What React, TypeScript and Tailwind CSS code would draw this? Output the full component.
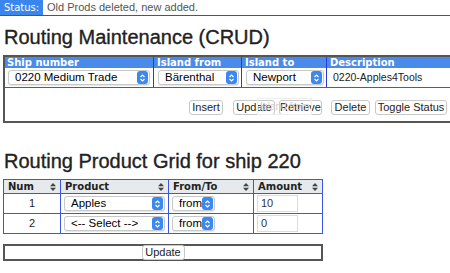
import { FC } from "react";

const verdana = "font-['DejaVu_Sans',Verdana,sans-serif]";
const helv = "font-['Liberation_Sans',Arial,sans-serif]";

const Stepper: FC = () => (
    <span className="w-[11px] h-[13px] rounded-[3px] bg-[#3a88f0] flex items-center justify-center shrink-0">
        <svg width="7" height="10" viewBox="0 0 7 10" fill="none" stroke="white" strokeWidth="1.2">
            <path d="M1.5 4 L3.5 2 L5.5 4" />
            <path d="M1.5 6 L3.5 8 L5.5 6" />
        </svg>
    </span>
);

const Select: FC<{ label: string; w: string }> = ({ label, w }) => (
    <div className={`${w} h-[15px] bg-white border border-[#c8c8c8] rounded-[3px] flex items-center pl-[6px] pr-[1px] shadow-[0_1px_1px_rgba(0,0,0,0.1)]`}>
        <span className={`flex-1 text-[11.5px] text-black ${helv} leading-none`}>{label}</span>
        <Stepper />
    </div>
);

const Btn: FC<{ label: string; w: string; ml?: string }> = ({ label, w, ml = "" }) => (
    <div className={`${w} ${ml} h-[15px] bg-white border border-[#c8c8c8] rounded-[3px] flex items-center justify-center text-[11px] text-[#222] ${helv} leading-none`}>
        {label}
    </div>
);

const SortIcon: FC = () => (
    <svg width="6" height="8" viewBox="0 0 6 8" fill="#444">
        <path d="M0 3.3 L3 0 L6 3.3 Z" />
        <path d="M0 4.7 L3 8 L6 4.7 Z" />
    </svg>
);

const Input: FC<{ v: string }> = ({ v }) => (
    <div className={`w-[41px] h-[17px] border border-[#dcdcdc] flex items-center pl-[3px] text-[11px] text-[#333] ${helv}`}>{v}</div>
);

const heading = `ml-[4px] text-[20px] leading-[24px] font-normal text-[#222] [-webkit-text-stroke:0.35px_#222] ${helv}`;

const App: FC = () => (
    <div className="w-[450px] h-[273px] bg-white overflow-hidden relative">
        <div className="flex h-[16px] border-b border-[#555]">
            <div className={`w-[43px] bg-[#3b86ec] text-white text-[10px] flex items-center justify-center ${verdana}`}>Status:</div>
            <div className={`pl-[4px] text-[11px] text-[#555] flex items-center ${helv}`}>Old Prods deleted, new added.</div>
        </div>
        <h1 className={`${heading} mt-[9px]`}>Routing Maintenance (CRUD)</h1>
        <div className="ml-[3px] mt-[6px] w-[447px] h-[68px] border-2 border-[#555] border-r-0 flex flex-col">
            <div className={`flex h-[11px] bg-[#4a8ae8] text-white text-[10px] font-bold leading-none ${verdana}`}>
                <div className="w-[148px] pl-[2px] flex items-center">Ship number</div>
                <div className="w-[88px] pl-[3px] border-l border-[#2a3ad8] flex items-center">Island from</div>
                <div className="w-[85px] pl-[3px] border-l border-[#2a3ad8] flex items-center">Island to</div>
                <div className="flex-1 pl-[3px] border-l border-[#2a3ad8] flex items-center">Description</div>
            </div>
            <div className="flex h-[20px] border-b border-[#3b55e6]">
                <div className="w-[148px] pl-[3px] flex items-center"><Select label="0220 Medium Trade" w="w-[142px]" /></div>
                <div className="w-[88px] pl-[4px] border-l border-[#2a3ad8] flex items-center"><Select label="Bärenthal" w="w-[81px]" /></div>
                <div className="w-[85px] pl-[4px] border-l border-[#2a3ad8] flex items-center"><Select label="Newport" w="w-[78px]" /></div>
                <div className={`flex-1 pl-[6px] border-l border-[#2a3ad8] flex items-center text-[10.5px] text-[#222] ${helv}`}>0220-Apples4Tools</div>
            </div>
            <div className="flex pl-[184px] pt-[12px] relative">
                <Btn label="Insert" w="w-[34px]" />
                <Btn label="Update" w="w-[42px]" ml="ml-[10px]" />
                <Btn label="Retrieve" w="w-[43px]" ml="ml-[4px]" />
                <Btn label="Delete" w="w-[39px]" ml="ml-[9px]" />
                <Btn label="Toggle Status" w="w-[72px]" ml="ml-[5px]" />
                <span className={`absolute left-[252px] top-[10px] px-[2px] text-[10px] text-[#d0d0d0] border border-[#eee] ${helv}`}>Island from</span>
            </div>
        </div>
        <h2 className={`${heading} mt-[26px]`}>Routing Product Grid for ship 220</h2>
        <div className={`ml-[3px] mt-[6px] w-[320px] border border-[#3b55e6] ${helv}`}>
            <div className={`flex h-[13px] bg-[#e6eaec] text-[10px] font-bold text-[#222] leading-none ${verdana}`}>
                <div className="w-[56px] px-[4px] flex items-center justify-between">Num<SortIcon /></div>
                <div className="w-[108px] px-[4px] border-l border-[#3b55e6] flex items-center justify-between">Product<SortIcon /></div>
                <div className="w-[85px] px-[4px] border-l border-[#3b55e6] flex items-center justify-between">From/To<SortIcon /></div>
                <div className="flex-1 px-[4px] border-l border-[#3b55e6] flex items-center justify-between">Amount<SortIcon /></div>
            </div>
            {[
                { n: "1", p: "Apples", a: "10" },
                { n: "2", p: "<-- Select -->", a: "0" },
            ].map((r) => (
                <div key={r.n} className="flex h-[20px] border-t border-[#3b55e6]">
                    <div className="w-[56px] flex items-center justify-center text-[11px] text-[#222]">{r.n}</div>
                    <div className="w-[108px] pl-[3px] border-l border-[#3b55e6] flex items-center"><Select label={r.p} w="w-[101px]" /></div>
                    <div className="w-[85px] pl-[3px] border-l border-[#3b55e6] flex items-center"><Select label="from" w="w-[43px]" /></div>
                    <div className="flex-1 pl-[3px] border-l border-[#3b55e6] flex items-center"><Input v={r.a} /></div>
                </div>
            ))}
        </div>
        <div className="ml-[3px] mt-[10px] w-[320px] h-[17px] border-2 border-[#555] flex items-center justify-center">
            <Btn label="Update" w="w-[43px]" />
        </div>
    </div>
);

export default App;
